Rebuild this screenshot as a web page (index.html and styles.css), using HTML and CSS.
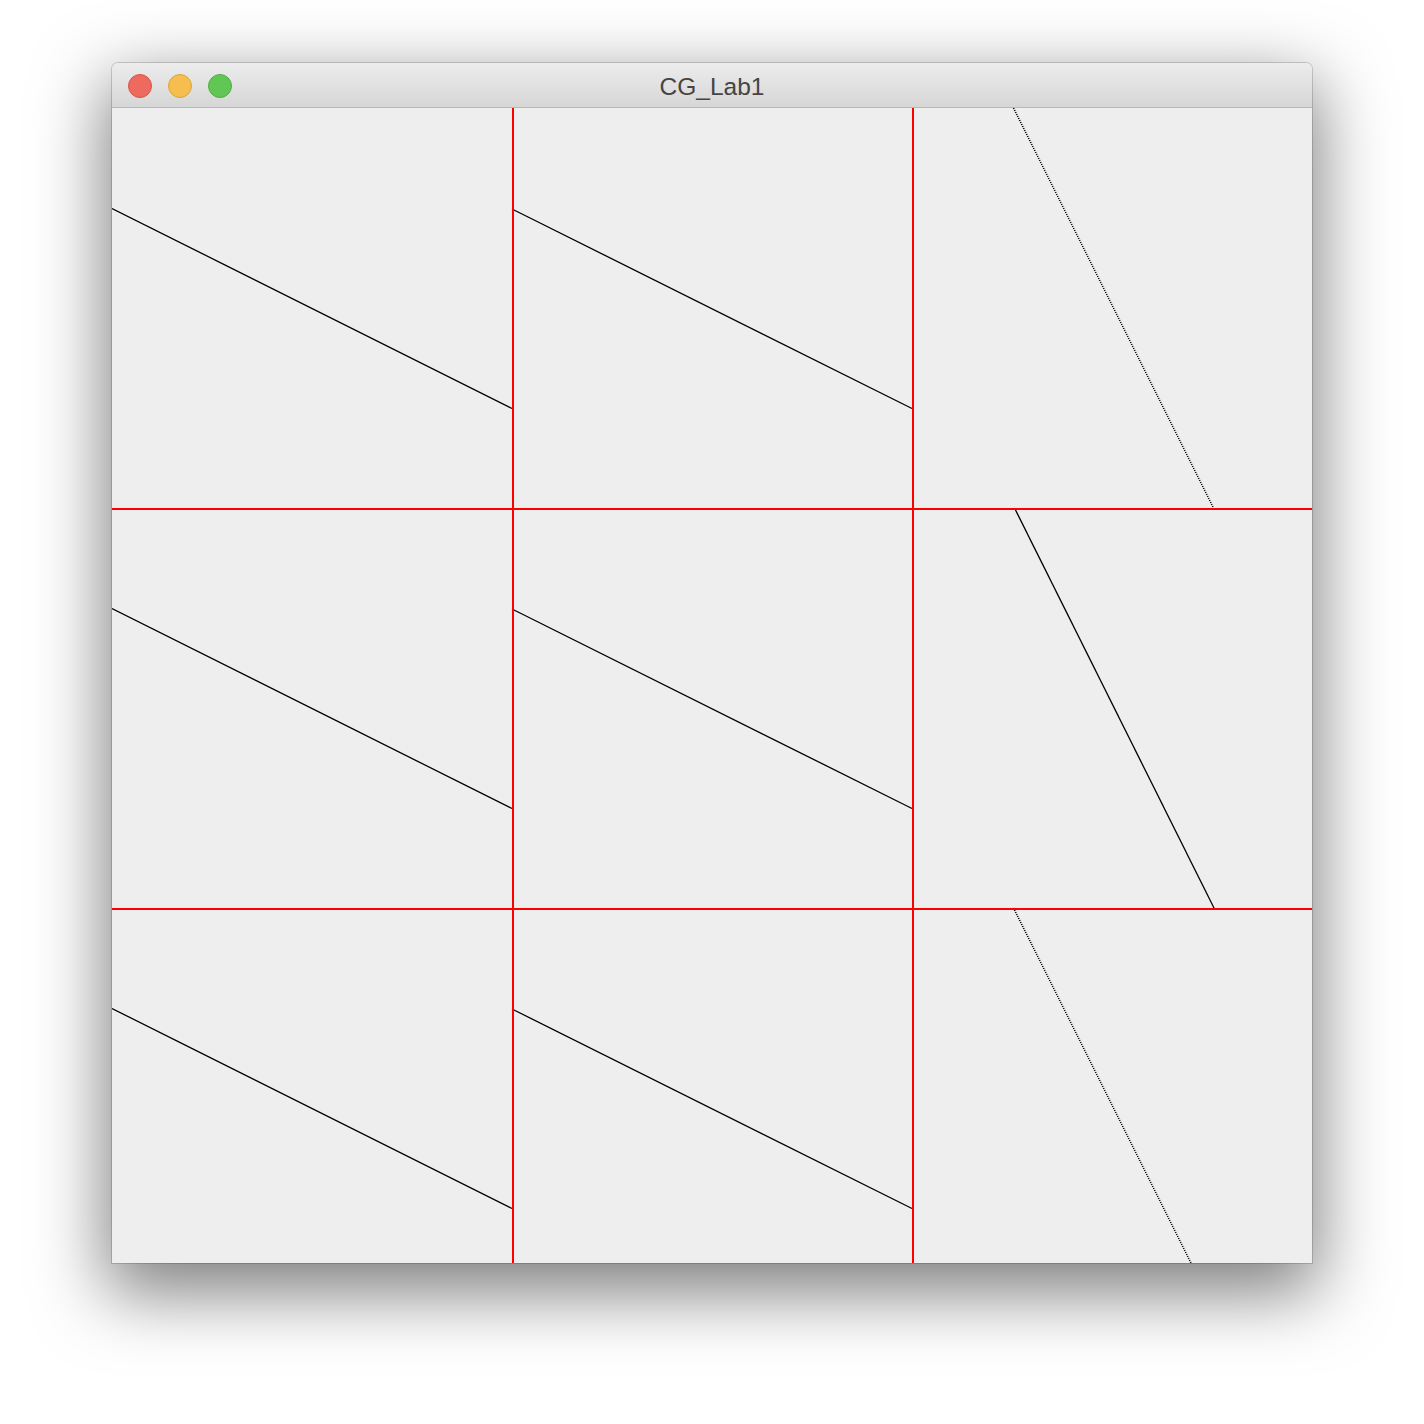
FILE: index.html
```html
<!DOCTYPE html>
<html>
<head>
<meta charset="utf-8">
<title>CG_Lab1</title>
<link rel="stylesheet" href="styles.css">
</head>
<body>
<div class="window">
  <div class="titlebar">
    <div class="lights">
      <span class="light red"></span>
      <span class="light yellow"></span>
      <span class="light green"></span>
    </div>
    <div class="title">CG_Lab1</div>
  </div>
  <div class="canvas">
    <svg class="drawing" width="1200" height="1155" viewBox="0 0 1200 1155">
      <g class="solid">
        <line x1="0" y1="100.5" x2="400" y2="300.5"/>
        <line x1="400" y1="101" x2="800" y2="300.5"/>
        <line x1="0" y1="500.5" x2="400" y2="700.5"/>
        <line x1="400" y1="501" x2="800" y2="700.5"/>
        <line x1="0" y1="900.5" x2="400" y2="1100.5"/>
        <line x1="400" y1="901" x2="800" y2="1100.5"/>
        <line x1="903" y1="401" x2="1102" y2="800"/>
      </g>
      <g class="dotted">
        <line x1="901.5" y1="0" x2="1101.5" y2="400"/>
        <line x1="901.5" y1="800" x2="1101.5" y2="1200"/>
      </g>
      <g class="red-lines">
        <rect x="400" y="0" width="2" height="1155"/>
        <rect x="800" y="0" width="2" height="1155"/>
        <rect x="0" y="400" width="1200" height="2"/>
        <rect x="0" y="800" width="1200" height="2"/>
      </g>
    </svg>
  </div>
</div>
</body>
</html>
```

FILE: styles.css
```css
html, body {
  margin: 0;
  padding: 0;
  background: #ffffff;
}

body {
  width: 1424px;
  height: 1424px;
  overflow: hidden;
  padding-top: 63px;
  box-sizing: border-box;
}

.window {
  width: 1200px;
  height: 1200px;
  margin-left: 112px;
  border-radius: 6px 6px 0 0;
  background: #eeeeee;
  box-shadow: 0 0 0 1px rgba(0, 0, 0, 0.16), 0 24px 70px 6px rgba(0, 0, 0, 0.5);
  display: flex;
  flex-direction: column;
  overflow: hidden;
}

.titlebar {
  height: 44px;
  flex: none;
  background: linear-gradient(#ececec, #d6d6d6);
  border-bottom: 1px solid #b8b8b8;
  display: flex;
  align-items: center;
  position: relative;
}

.lights {
  display: flex;
  gap: 16px;
  padding-left: 16px;
  padding-top: 2px;
}

.light {
  width: 24px;
  height: 24px;
  border-radius: 50%;
  box-sizing: border-box;
}

.red {
  background: #ee6a5e;
  border: 1px solid #d8544a;
}

.yellow {
  background: #f6be4f;
  border: 1px solid #dca33b;
}

.green {
  background: #62c655;
  border: 1px solid #4fae42;
}

.title {
  position: absolute;
  left: 0;
  right: 0;
  top: 0;
  bottom: 0;
  display: flex;
  align-items: center;
  justify-content: center;
  font-family: "Liberation Sans", Arial, sans-serif;
  font-size: 24.5px;
  color: #454545;
  padding-top: 4px;
  pointer-events: none;
}

.canvas {
  flex: 1;
  background: #eeeeee;
  overflow: hidden;
}

.drawing {
  display: block;
}

.solid line {
  stroke: #000000;
  stroke-width: 1.3;
  fill: none;
}

.dotted line {
  stroke: #000000;
  stroke-width: 1.6;
  stroke-dasharray: 1.1 1.136;
  fill: none;
}

.red-lines rect {
  fill: #ff0000;
}
```
